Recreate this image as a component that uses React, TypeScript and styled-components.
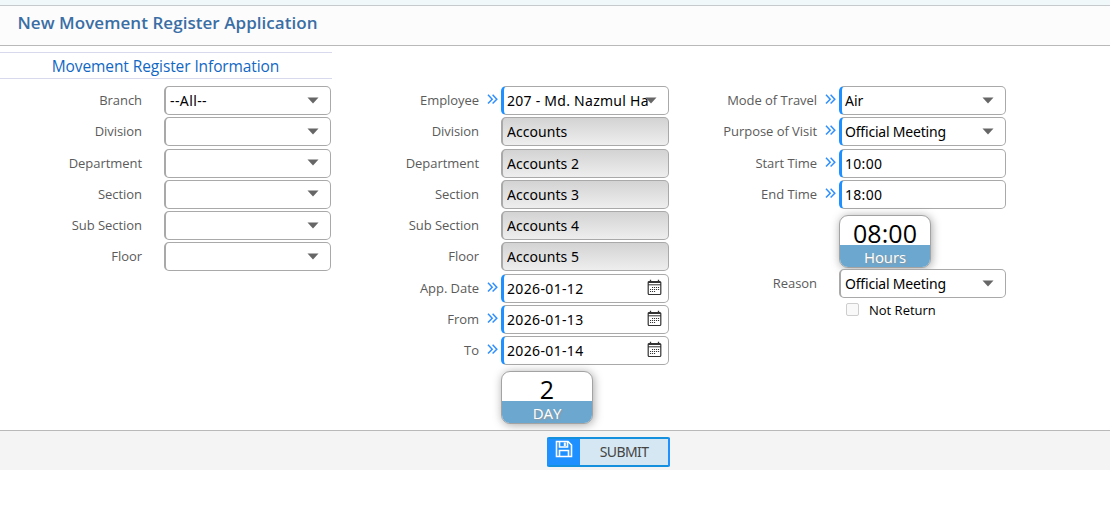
import React from "react";
import styled, { createGlobalStyle } from "styled-components";

const GlobalStyle = createGlobalStyle`
  * { box-sizing: border-box; }
  body { margin: 0; background: #fff; font-family: "Open Sans", sans-serif; color: #000; }
`;

const Page = styled.main`
  width: 1110px;
  height: 525px;
  overflow: hidden;
  display: flex;
  flex-direction: column;
`;

const TopStrip = styled.div`
  height: 5px;
  flex: none;
  background: #f0f8fa;
`;

const Header = styled.header`
  height: 41px;
  flex: none;
  padding: 0 0 5px 17.5px;
  display: flex;
  align-items: center;
  background: #fcfcfc;
  border-top: 1px solid #c6cacc;
  border-bottom: 1px solid #b9b9b9;
`;

const Title = styled.h1`
  margin: 0;
  font-size: 17px;
  line-height: 24px;
  font-weight: 600;
  letter-spacing: 0.05px;
  color: #3a6ea5;
  white-space: nowrap;
`;

const SectionTitle = styled.h2`
  width: 332px;
  height: 27px;
  flex: none;
  margin: 6px 0 7px;
  padding-right: 1px;
  border-top: 1px solid #d9d9ee;
  border-bottom: 1px solid #d9d9ee;
  font-size: 15.5px;
  line-height: 27px;
  font-weight: 400;
  letter-spacing: -0.1px;
  text-align: center;
  color: #1168c4;
  white-space: nowrap;
`;

const Form = styled.section`
  display: grid;
  grid-template-columns: 337px 338px 1fr;
  height: 344px;
  flex: none;
`;

const Column = styled.div`
  display: flex;
  flex-direction: column;
  gap: 2.25px;
  padding-top: 0.1px;
`;

const Row = styled.div`
  display: grid;
  grid-template-columns: 142px 22px auto;
  height: 29px;
  flex: none;
`;

const Label = styled.label`
  text-align: right;
  font-size: 13px;
  line-height: 29px;
  letter-spacing: -0.05px;
  color: #5b5b5b;
  white-space: nowrap;
`;

const Marker = styled.span`
  padding: 8px 0 0 8px;
  line-height: 0;
`;

const Box = styled.div<{ $required?: boolean; $readOnly?: boolean; $wide?: boolean }>`
  width: ${(p) => (p.$wide ? 168 : 167)}px;
  height: 29px;
  display: flex;
  align-items: center;
  justify-content: space-between;
  padding: 0 7px 0 ${(p) => (p.$required ? 3 : 4)}px;
  border: 1px solid #a9a9a9;
  border-left: ${(p) => (p.$required ? "3px solid #1e90ff" : "2px solid #a9a9a9")};
  border-radius: 5px;
  background: ${(p) => (p.$readOnly ? "linear-gradient(#d3d3d3, #eeeeee)" : "#fff")};
`;

const Value = styled.span<{ $spacing: number }>`
  width: 142px;
  flex: none;
  overflow: hidden;
  padding-top: 1px;
  font-family: "Noto Sans", sans-serif;
  font-size: 14px;
  line-height: 24px;
  letter-spacing: ${(p) => p.$spacing}px;
  white-space: nowrap;
`;

const Arrow = styled.svg`
  width: 12px;
  height: 7px;
  flex: none;
  margin: 0 4px 1px -16px;
`;

const CalendarIcon = styled.svg`
  width: 15px;
  height: 17px;
  flex: none;
  margin: 0 -1px 2px -14px;
`;

const BadgeRow = styled.div<{ $height: number }>`
  height: ${(p) => p.$height}px;
  flex: none;
  padding: 4px 0 0 164px;
`;

const Badge = styled.div`
  width: 92px;
  height: 53px;
  display: flex;
  flex-direction: column;
  overflow: hidden;
  border: 1px solid #a3a3a3;
  border-radius: 9px;
  background: #fff;
  box-shadow: 1px 1px 10px rgba(0, 0, 0, 0.35);
  text-align: center;
`;

const BadgeValue = styled.div`
  height: 29px;
  flex: none;
  padding-top: 6px;
  font-size: 25px;
  line-height: 23px;
  letter-spacing: 0.1px;
`;

const BadgeUnit = styled.div`
  flex: 1;
  background: #6ba7cf;
  color: #fff;
  font-size: 15px;
  line-height: 24px;
  letter-spacing: -0.1px;
  text-shadow: 1px 1px 2px #999;
`;

const CheckRow = styled.label`
  display: flex;
  height: 22px;
  padding: 1px 0 0 171px;
  font-size: 13px;
  line-height: 16px;
`;

const CheckBox = styled.span`
  width: 13px;
  height: 13px;
  margin: 1px 10px 0 0;
  border: 1px solid #cecece;
  border-radius: 2px;
  background: #f9f9f9;
`;

const Footer = styled.footer`
  height: 40px;
  flex: none;
  padding: 6px 0 0 547px;
  border-top: 1px solid #b9b9b9;
  background: #f4f4f4;
`;

const Submit = styled.button`
  width: 123px;
  height: 30px;
  display: flex;
  padding: 0;
  border: 2px solid #1e90ff;
  border-top-color: #1490dc;
  border-bottom-color: #1490dc;
  border-radius: 2px;
  background: #d5e7f2;
  overflow: hidden;
`;

const SubmitIcon = styled.span`
  width: 31px;
  height: 26px;
  padding: 1px 2px 0 0;
  line-height: 0;
  background: #1e90ff;
`;

const SubmitText = styled.span`
  flex: 1;
  font: 14px/26px "Noto Sans", sans-serif;
  letter-spacing: -0.6px;
  color: #444;
`;

const Chevrons = () => (
  <svg width="12" height="11" viewBox="0 0 12 11" fill="none" stroke="#2e8fff" strokeWidth="1.5">
    <path d="M1 .8 5.2 5.2 1 9.6M5.6 .8 9.8 5.2 5.6 9.6" />
  </svg>
);

const Calendar = () => (
  <CalendarIcon viewBox="0 0 15 17" fill="none" stroke="#333">
    <rect x="1.2" y="2.5" width="12.6" height="13" rx="1" strokeWidth="1.2" />
    <path d="M1 3.5H14M1 5.8H14" strokeWidth="1" />
    <path d="M3.5 .8V4M11.5 .8V4" strokeWidth="1.3" />
    <path d="M5 8.5H12.5M3 10.5H12.5M3 12.5H9" strokeWidth="1.1" strokeDasharray="1.1 .9" />
  </CalendarIcon>
);

type FieldProps = {
  label: string;
  value?: string;
  kind?: "select" | "date" | "text" | "readonly";
  required?: boolean;
  wide?: boolean;
  spacing?: number;
};

const Field = ({ label, value, kind = "select", required, wide, spacing = 0 }: FieldProps) => (
  <Row>
    <Label>{label}</Label>
    <Marker>{required && <Chevrons />}</Marker>
    <Box $required={required} $readOnly={kind === "readonly"} $wide={wide}>
      <Value $spacing={spacing}>{value}</Value>
      {kind === "select" && (
        <Arrow viewBox="0 0 12 7">
          <path d="M.5 .5H11.5L6 6.5Z" fill="#666" />
        </Arrow>
      )}
      {kind === "date" && <Calendar />}
    </Box>
  </Row>
);

const filters = ["Branch", "Division", "Department", "Section", "Sub Section", "Floor"];
const details = [
  ["Division", "Accounts"],
  ["Department", "Accounts 2"],
  ["Section", "Accounts 3"],
  ["Sub Section", "Accounts 4"],
  ["Floor", "Accounts 5"],
];
const dates = [
  ["App. Date", "2026-01-12"],
  ["From", "2026-01-13"],
  ["To", "2026-01-14"],
];

export default function App() {
  return (
    <Page>
      <GlobalStyle />
      <TopStrip />
      <Header>
        <Title>New Movement Register Application</Title>
      </Header>
      <SectionTitle>Movement Register Information</SectionTitle>
      <Form>
        <Column>
          {filters.map((name, i) => (
            <Field key={name} label={name} value={i === 0 ? "--All--" : ""} spacing={0.4} />
          ))}
        </Column>
        <Column>
          <Field label="Employee" value="207 - Md. Nazmul Haque" required wide spacing={0.26} />
          {details.map(([label, value]) => (
            <Field key={label} label={label} value={value} kind="readonly" wide spacing={0.05} />
          ))}
          {dates.map(([label, value]) => (
            <Field key={label} label={label} value={value} kind="date" required wide spacing={0.35} />
          ))}
          <BadgeRow $height={58}>
            <Badge>
              <BadgeValue>2</BadgeValue>
              <BadgeUnit>DAY</BadgeUnit>
            </Badge>
          </BadgeRow>
        </Column>
        <Column>
          <Field label="Mode of Travel" value="Air" required />
          <Field label="Purpose of Visit" value="Official Meeting" required spacing={-0.2} />
          <Field label="Start Time" value="10:00" kind="text" required spacing={0.3} />
          <Field label="End Time" value="18:00" kind="text" required spacing={0.3} />
          <BadgeRow $height={56}>
            <Badge>
              <BadgeValue>08:00</BadgeValue>
              <BadgeUnit>Hours</BadgeUnit>
            </Badge>
          </BadgeRow>
          <Field label="Reason" value="Official Meeting" spacing={-0.2} />
          <CheckRow>
            <CheckBox />
            Not Return
          </CheckRow>
        </Column>
      </Form>
      <Footer>
        <Submit type="button">
          <SubmitIcon>
            <svg width="18" height="18" viewBox="0 0 18 18" fill="none" stroke="#fff" strokeWidth="1.6">
              <path d="M1.5 1.5H13L16.5 5V16.5H1.5Z" />
              <path d="M4.5 1.5V7H12.5V1.5M4.5 16.5V10.5H13.5V16.5" />
              <path d="M9.8 2.5V6" strokeWidth="2" />
            </svg>
          </SubmitIcon>
          <SubmitText>SUBMIT</SubmitText>
        </Submit>
      </Footer>
    </Page>
  );
}
